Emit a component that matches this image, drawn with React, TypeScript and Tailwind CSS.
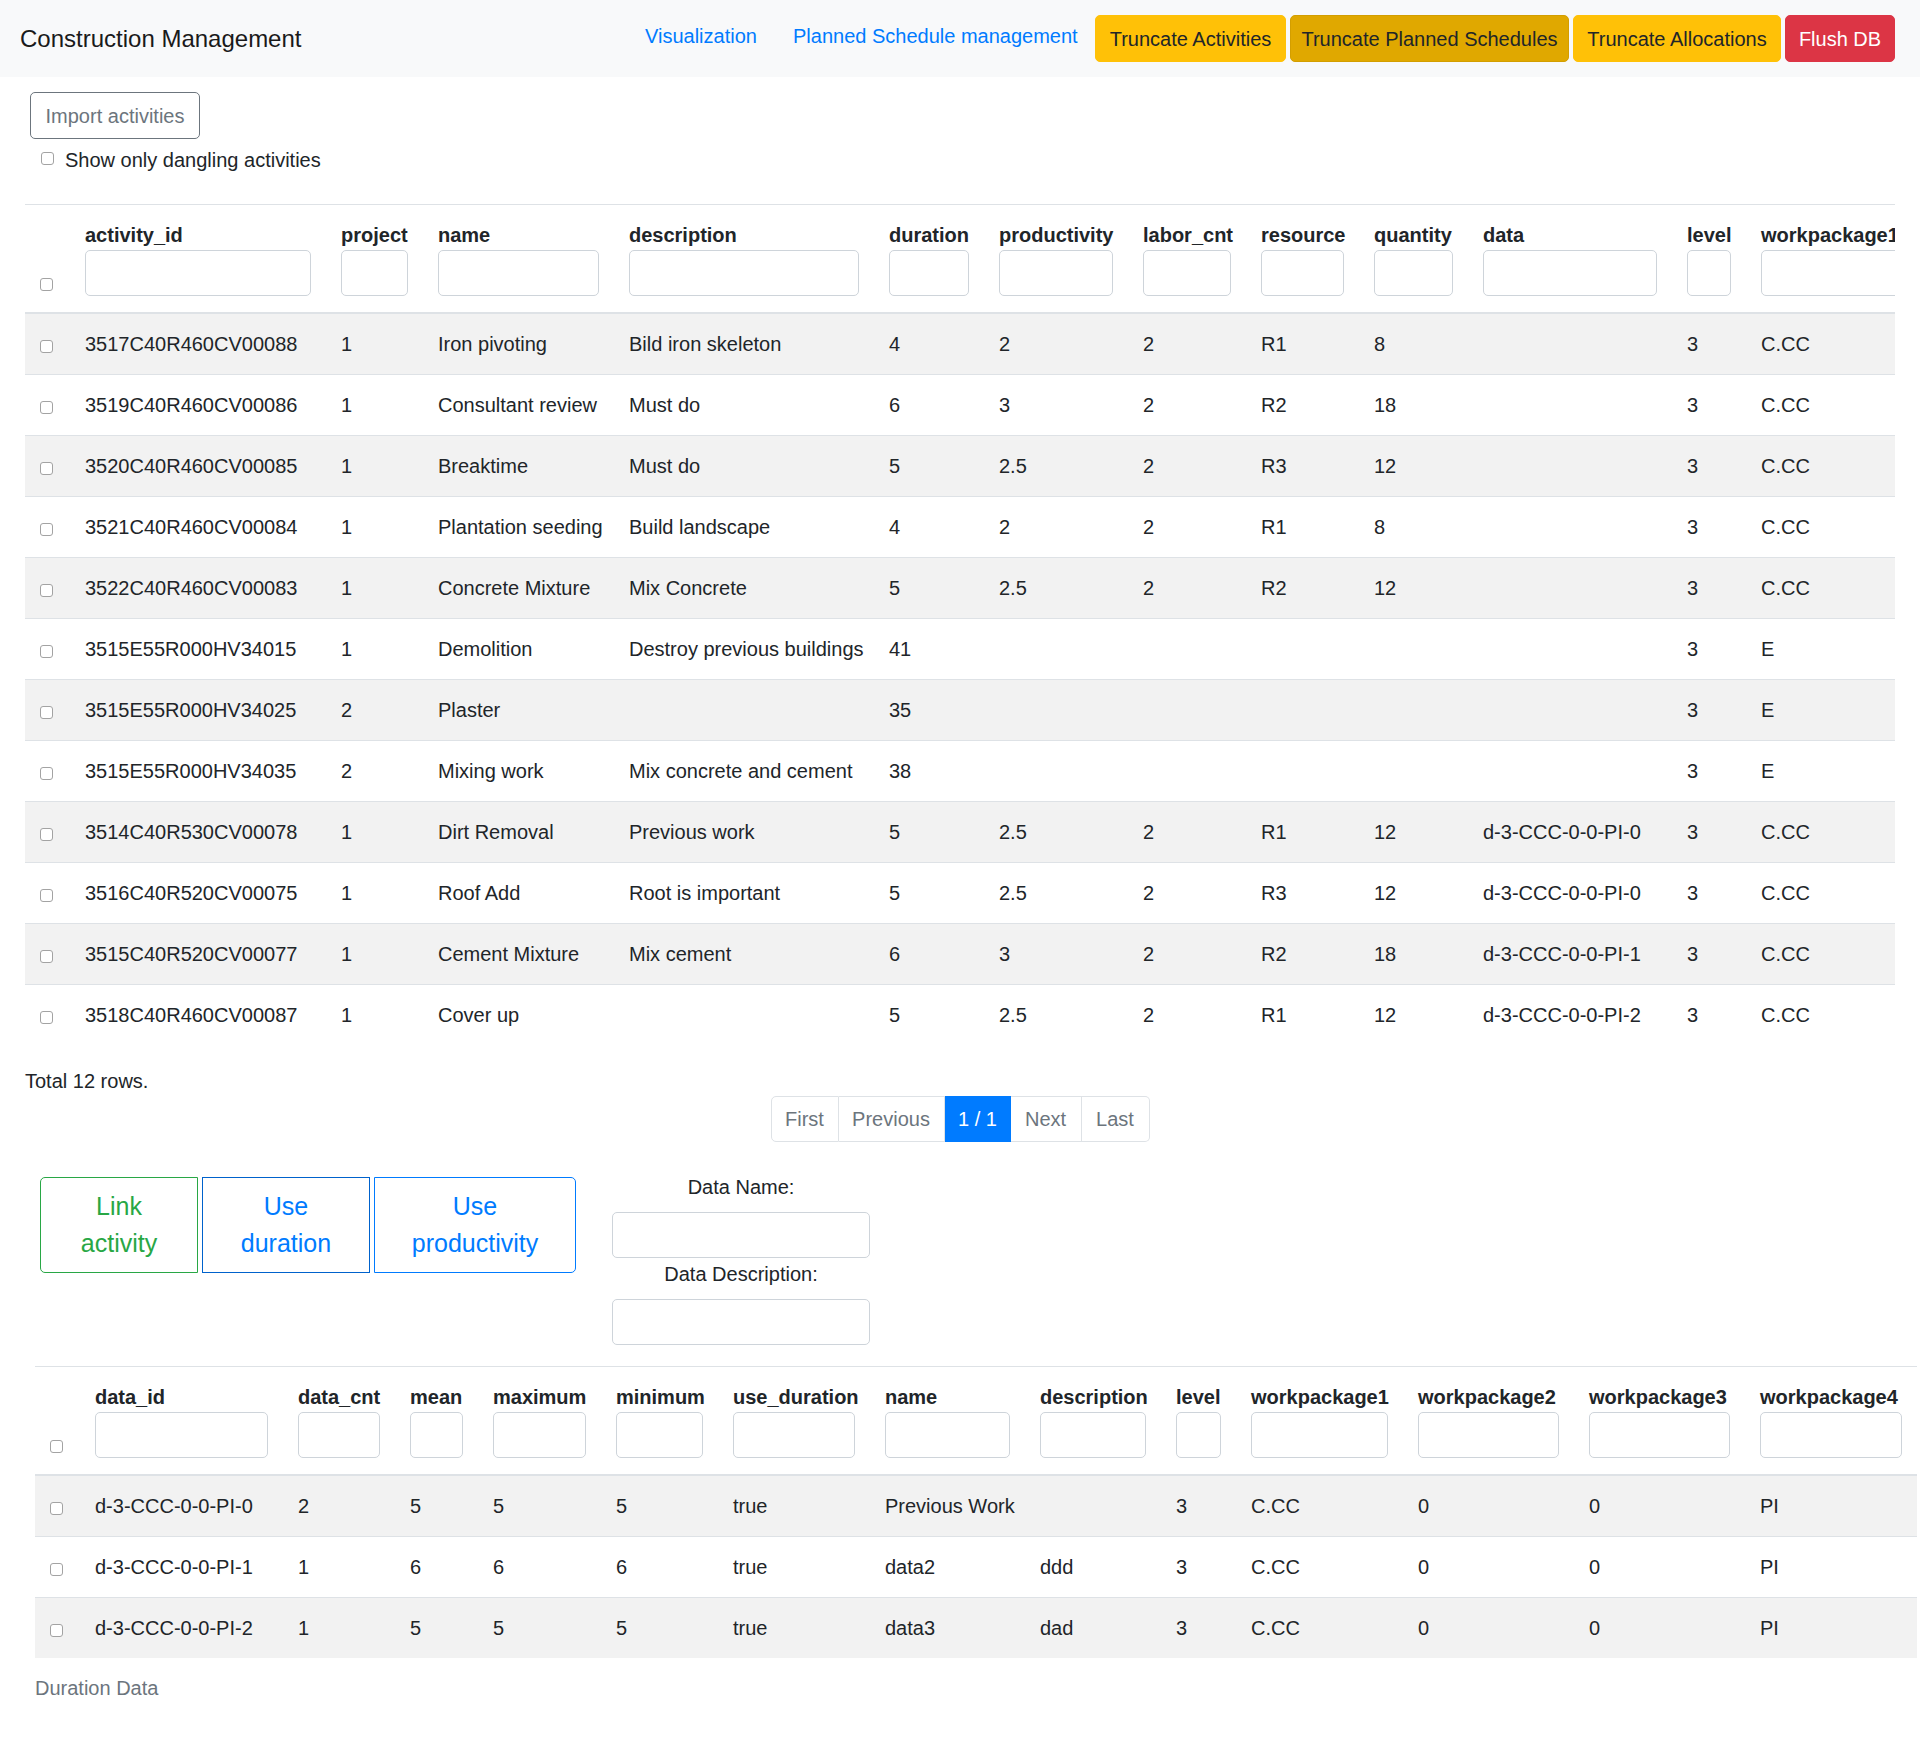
import React from "react";

type Col = { label: string; w: string };

const cols1: Col[] = [
  { label: "activity_id", w: "w-[256px]" },
  { label: "project", w: "w-[97px]" },
  { label: "name", w: "w-[191px]" },
  { label: "description", w: "w-[260px]" },
  { label: "duration", w: "w-[110px]" },
  { label: "productivity", w: "w-[144px]" },
  { label: "labor_cnt", w: "w-[118px]" },
  { label: "resource", w: "w-[113px]" },
  { label: "quantity", w: "w-[109px]" },
  { label: "data", w: "w-[204px]" },
  { label: "level", w: "w-[74px]" },
  { label: "workpackage1", w: "w-[190px]" },
];

const rows1: string[][] = [
  ["3517C40R460CV00088", "1", "Iron pivoting", "Bild iron skeleton", "4", "2", "2", "R1", "8", "", "3", "C.CC"],
  ["3519C40R460CV00086", "1", "Consultant review", "Must do", "6", "3", "2", "R2", "18", "", "3", "C.CC"],
  ["3520C40R460CV00085", "1", "Breaktime", "Must do", "5", "2.5", "2", "R3", "12", "", "3", "C.CC"],
  ["3521C40R460CV00084", "1", "Plantation seeding", "Build landscape", "4", "2", "2", "R1", "8", "", "3", "C.CC"],
  ["3522C40R460CV00083", "1", "Concrete Mixture", "Mix Concrete", "5", "2.5", "2", "R2", "12", "", "3", "C.CC"],
  ["3515E55R000HV34015", "1", "Demolition", "Destroy previous buildings", "41", "", "", "", "", "", "3", "E"],
  ["3515E55R000HV34025", "2", "Plaster", "", "35", "", "", "", "", "", "3", "E"],
  ["3515E55R000HV34035", "2", "Mixing work", "Mix concrete and cement", "38", "", "", "", "", "", "3", "E"],
  ["3514C40R530CV00078", "1", "Dirt Removal", "Previous work", "5", "2.5", "2", "R1", "12", "d-3-CCC-0-0-PI-0", "3", "C.CC"],
  ["3516C40R520CV00075", "1", "Roof Add", "Root is important", "5", "2.5", "2", "R3", "12", "d-3-CCC-0-0-PI-0", "3", "C.CC"],
  ["3515C40R520CV00077", "1", "Cement Mixture", "Mix cement", "6", "3", "2", "R2", "18", "d-3-CCC-0-0-PI-1", "3", "C.CC"],
  ["3518C40R460CV00087", "1", "Cover up", "", "5", "2.5", "2", "R1", "12", "d-3-CCC-0-0-PI-2", "3", "C.CC"],
];

const cols2: Col[] = [
  { label: "data_id", w: "w-[203px]" },
  { label: "data_cnt", w: "w-[112px]" },
  { label: "mean", w: "w-[83px]" },
  { label: "maximum", w: "w-[123px]" },
  { label: "minimum", w: "w-[117px]" },
  { label: "use_duration", w: "w-[152px]" },
  { label: "name", w: "w-[155px]" },
  { label: "description", w: "w-[136px]" },
  { label: "level", w: "w-[75px]" },
  { label: "workpackage1", w: "w-[167px]" },
  { label: "workpackage2", w: "w-[171px]" },
  { label: "workpackage3", w: "w-[171px]" },
  { label: "workpackage4", w: "w-[172px]" },
];

const rows2: string[][] = [
  ["d-3-CCC-0-0-PI-0", "2", "5", "5", "5", "true", "Previous Work", "", "3", "C.CC", "0", "0", "PI"],
  ["d-3-CCC-0-0-PI-1", "1", "6", "6", "6", "true", "data2", "ddd", "3", "C.CC", "0", "0", "PI"],
  ["d-3-CCC-0-0-PI-2", "1", "5", "5", "5", "true", "data3", "dad", "3", "C.CC", "0", "0", "PI"],
];

function Cb() {
  return <span className="block w-[13px] h-[13px] rounded-[3px] border border-[#a3a3a3] bg-white" />;
}

function DataTable({
  cols,
  rows,
  tableW,
  caption,
}: {
  cols: Col[];
  rows: string[][];
  tableW: string;
  caption?: string;
}) {
  return (
    <table className={`table-fixed border-collapse text-[20px] text-[#212529] ${tableW}`}>
      <colgroup>
        <col className="w-[45px]" />
        {cols.map((c) => (
          <col key={c.label} className={c.w} />
        ))}
      </colgroup>
      <thead>
        <tr>
          <th className="border-t border-b-2 border-[#dee2e6] pl-[15px] pr-[15px] pb-[21px] align-bottom">
            <Cb />
          </th>
          {cols.map((c) => (
            <th
              key={c.label}
              className="border-t border-b-2 border-[#dee2e6] px-[15px] pt-[15px] pb-[16px] text-left align-bottom font-bold"
            >
              <div className="leading-[30px] whitespace-nowrap">{c.label}</div>
              <div className="h-[46px] w-full rounded-[5px] border border-[#ced4da] bg-white" />
            </th>
          ))}
        </tr>
      </thead>
      <tbody>
        {rows.map((r, i) => (
          <tr key={i} className={i % 2 === 0 ? "bg-[#f2f2f2]" : "bg-white"}>
            <td className="border-t border-[#dee2e6] pl-[15px] pr-[15px] py-[15px] align-top">
              <div className="pt-[11px]">
                <Cb />
              </div>
            </td>
            {r.map((v, j) => (
              <td
                key={j}
                className="border-t border-[#dee2e6] px-[15px] py-[15px] leading-[30px] align-top whitespace-nowrap"
              >
                {v}
              </td>
            ))}
          </tr>
        ))}
      </tbody>
      {caption ? (
        <caption className="caption-bottom text-left text-[#6c757d] py-[15px] leading-[30px]">{caption}</caption>
      ) : null}
    </table>
  );
}

export default function App() {
  return (
    <div className="w-[1920px] bg-white font-['Liberation_Sans',Arial,sans-serif] text-[20px] text-[#212529] pb-[40px]">
      {/* Navbar */}
      <div className="h-[77px] w-full bg-[#f8f9fa] flex items-center pl-[20px] pr-[25px]">
        <div className="text-[24px] leading-[37px] text-[#1a1a1a] whitespace-nowrap">Construction Management</div>
        <div className="ml-auto flex items-center">
          <div className="flex items-center gap-[39px] mb-[6px]">
            <span className="w-[109px] text-[#007bff] leading-[30px] whitespace-nowrap">Visualization</span>
            <span className="w-[277px] text-[#007bff] leading-[30px] whitespace-nowrap">Planned Schedule management</span>
          </div>
          <div className="ml-[25px] flex items-center gap-[4px]">
            <button className="h-[47px] w-[191px] rounded-[5px] bg-[#ffc107] border border-[#ffc107] text-[#212529] whitespace-nowrap">
              Truncate Activities
            </button>
            <button className="h-[47px] w-[279px] rounded-[5px] bg-[#e0a800] border border-[#d39e00] text-[#212529] whitespace-nowrap">
              Truncate Planned Schedules
            </button>
            <button className="h-[47px] w-[208px] rounded-[5px] bg-[#ffc107] border border-[#ffc107] text-[#212529] whitespace-nowrap">
              Truncate Allocations
            </button>
            <button className="h-[47px] w-[110px] rounded-[5px] bg-[#dc3545] border border-[#dc3545] text-white whitespace-nowrap">
              Flush DB
            </button>
          </div>
        </div>
      </div>

      {/* Import */}
      <div className="pl-[30px] pt-[15px]">
        <button className="h-[47px] w-[170px] rounded-[5px] border border-[#6c757d] text-[#6c757d] whitespace-nowrap">
          Import activities
        </button>
      </div>
      <div className="mt-[6px] ml-[41px] flex items-center gap-[11px] h-[30px]">
        <span className="mb-[3px]">
          <Cb />
        </span>
        <span className="leading-[30px] whitespace-nowrap">Show only dangling activities</span>
      </div>

      {/* Table 1 */}
      <div className="mt-[29px] ml-[25px] w-[1870px] overflow-hidden">
        <DataTable cols={cols1} rows={rows1} tableW="w-[1910px]" />
      </div>

      <div className="mt-[21px] ml-[25px] leading-[30px]">Total 12 rows.</div>

      {/* Pagination */}
      <div className="flex justify-center">
        <div className="flex h-[46px] text-[#6c757d]">
          <span className="w-[68px] flex items-center justify-center border border-[#dee2e6] rounded-l-[5px]">First</span>
          <span className="w-[106px] flex items-center justify-center border-y border-r border-[#dee2e6]">Previous</span>
          <span className="w-[66px] flex items-center justify-center bg-[#007bff] border border-[#007bff] text-white">1 / 1</span>
          <span className="w-[71px] flex items-center justify-center border-y border-r border-[#dee2e6]">Next</span>
          <span className="w-[68px] flex items-center justify-center border-y border-r border-[#dee2e6] rounded-r-[5px]">Last</span>
        </div>
      </div>

      {/* Buttons + form */}
      <div className="mt-[30px] flex items-start">
        <div className="ml-[40px] mt-[5px] flex gap-[4px] text-[25px] leading-[37.5px]">
          <button className="h-[96px] w-[158px] rounded-l-[5px] border border-[#28a745] text-[#28a745] text-center">
            Link
            <br />
            activity
          </button>
          <button className="h-[96px] w-[168px] border border-[#0062cc] text-[#007bff] text-center">
            Use
            <br />
            duration
          </button>
          <button className="h-[96px] w-[202px] rounded-r-[5px] border border-[#007bff] text-[#007bff] text-center">
            Use
            <br />
            productivity
          </button>
        </div>
        <div className="ml-[36px] w-[258px] flex flex-col items-center">
          <div className="leading-[30px] whitespace-nowrap">Data Name:</div>
          <div className="mt-[10px] h-[46px] w-full rounded-[5px] border border-[#ced4da] bg-white" />
          <div className="mt-[1px] leading-[30px] whitespace-nowrap">Data Description:</div>
          <div className="mt-[10px] h-[46px] w-full rounded-[5px] border border-[#ced4da] bg-white" />
        </div>
      </div>

      {/* Table 2 */}
      <div className="mt-[21px] ml-[35px]">
        <DataTable cols={cols2} rows={rows2} tableW="w-[1882px]" caption="Duration Data" />
      </div>
    </div>
  );
}
